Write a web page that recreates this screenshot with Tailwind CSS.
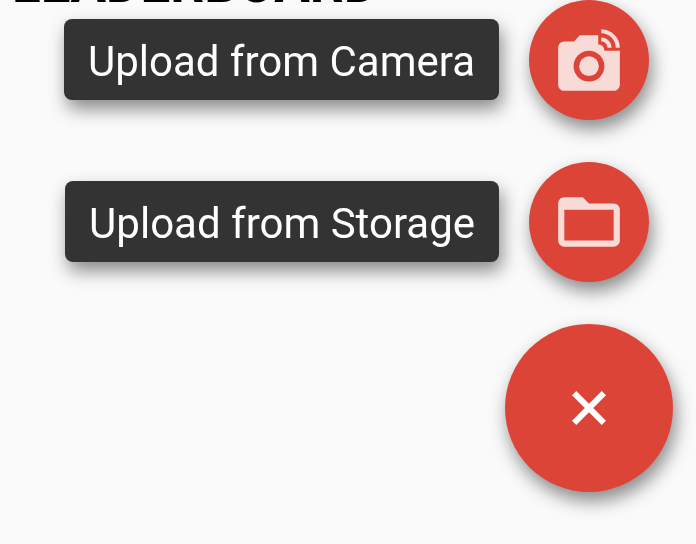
<!DOCTYPE html>
<html lang="en">
<head>
<meta charset="utf-8">
<meta name="viewport" content="width=device-width, initial-scale=1">
<title>Leaderboard</title>
<script src="https://cdn.jsdelivr.net/npm/@tailwindcss/browser@4"></script>
</head>
<body class="relative min-h-screen overflow-hidden bg-[#fafafa] font-[Roboto,sans-serif]">
  <main class="px-3">
    <h1 class="-mt-[48px] text-[53px] leading-[64px] font-bold text-black">LEADERBOARD</h1>
  </main>

  <div class="fixed right-[23px] bottom-[52px] flex flex-col items-end gap-[42px]">
    <div class="mr-6 flex items-center gap-[30px]">
      <label for="camera" class="mb-px rounded-lg bg-[#333333] px-6 pt-[18px] pb-[14px] text-[42px] leading-[49px] whitespace-nowrap text-white shadow-[3px_9px_18px_rgba(0,0,0,0.45)]">Upload from Camera</label>
      <button id="camera" type="button" class="flex size-[120px] items-center justify-center rounded-full bg-[#db4437] text-white/80 shadow-[3px_9px_18px_rgba(0,0,0,0.45)]">
        <svg class="size-[74px]" viewBox="0 0 24 24" fill="currentColor" aria-hidden="true">
          <circle cx="12" cy="14" r="3.2"/>
          <path d="M16 3.33c2.58 0 4.67 2.09 4.67 4.67H22c0-3.31-2.69-6-6-6v1.33M16 6c1.11 0 2 .89 2 2h1.33c0-1.84-1.49-3.33-3.33-3.33V6"/>
          <path d="M17 9c0-1.11-.89-2-2-2V4H9L7.17 6H4c-1.1 0-2 .9-2 2v12c0 1.1.9 2 2 2h16c1.1 0 2-.9 2-2V9h-5zm-5 10c-2.76 0-5-2.24-5-5s2.24-5 5-5 5 2.24 5 5-2.24 5-5 5z"/>
        </svg>
      </button>
    </div>
    <div class="mr-6 flex items-center gap-[30px]">
      <label for="storage" class="mb-px rounded-lg bg-[#333333] px-6 pt-[18px] pb-[14px] text-[42px] leading-[49px] whitespace-nowrap text-white shadow-[3px_9px_18px_rgba(0,0,0,0.45)]">Upload from Storage</label>
      <button id="storage" type="button" class="flex size-[120px] items-center justify-center rounded-full bg-[#db4437] text-white/80 shadow-[3px_9px_18px_rgba(0,0,0,0.45)]">
        <svg class="size-[74px]" viewBox="0 0 24 24" fill="currentColor" aria-hidden="true">
          <path d="M20 6h-8l-2-2H4c-1.1 0-1.99.9-1.99 2L2 18c0 1.1.9 2 2 2h16c1.1 0 2-.9 2-2V8c0-1.1-.9-2-2-2zm0 12H4V8h16v10z"/>
        </svg>
      </button>
    </div>
    <button type="button" aria-label="Close menu" class="flex size-[168px] items-center justify-center rounded-full bg-[#db4437] text-white shadow-[3px_9px_18px_rgba(0,0,0,0.45)]">
      <svg class="size-[42px]" viewBox="0 0 42 42" fill="none" stroke="currentColor" stroke-width="6" aria-hidden="true">
        <path d="M6.15 6.15l29.7 29.7M35.85 6.15l-29.7 29.7"/>
      </svg>
    </button>
  </div>
</body>
</html>
